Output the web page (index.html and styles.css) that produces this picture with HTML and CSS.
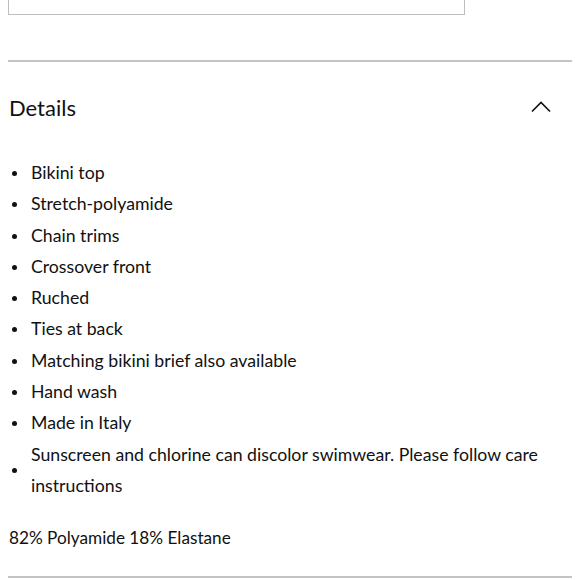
FILE: index.html
```html
<!DOCTYPE html>
<html>
<head>
<meta charset="utf-8">
<link rel="stylesheet" href="styles.css">
</head>
<body>
<div class="page">
  <div class="select-box"></div>
  <section class="accordion">
    <div class="acc-head">
      <h2 class="acc-title">Details</h2>
      <svg class="chev" width="20" height="12" viewBox="0 0 20 12"><polyline points="1,10.5 10,1.5 19,10.5" fill="none" stroke="#111" stroke-width="1.6"/></svg>
    </div>
    <ul class="features">
      <li>Bikini top</li>
      <li>Stretch-polyamide</li>
      <li>Chain trims</li>
      <li>Crossover front</li>
      <li>Ruched</li>
      <li>Ties at back</li>
      <li>Matching bikini brief also available</li>
      <li>Hand wash</li>
      <li>Made in Italy</li>
      <li class="multi">Sunscreen and chlorine can discolor swimwear. Please follow care instructions</li>
    </ul>
    <p class="composition">82% Polyamide 18% Elastane</p>
  </section>
</div>
</body>
</html>
```
FILE: styles.css
```css
html, body {
  margin: 0;
  padding: 0;
  background: #fff;
}
body {
  font-family: "Lato", "Noto Sans", sans-serif;
  color: #111;
  overflow: hidden;
}
.page {
  padding: 0 8px;
}
.select-box {
  width: 455px;
  height: 40px;
  margin-top: -27px;
  border: 1px solid #bdbdbd;
}
.accordion {
  margin-top: 45px;
  border-top: 2px solid #c4c4c4;
  border-bottom: 2px solid #c4c4c4;
}
.acc-head {
  display: flex;
  align-items: center;
  justify-content: space-between;
  height: 90px;
  padding-bottom: 4px;
  padding-right: 21px;
}
.acc-title {
  margin: 0;
  font-size: 22px;
  font-weight: 400;
  padding-left: 1px;
}
.chev {
  display: block;
}
.features {
  list-style: none;
  margin: 0;
  padding: 1px 0 0;
}
.features li {
  position: relative;
  padding-left: 23px;
  font-size: 17.7px;
  line-height: 31.3px;
}
.features li::before {
  content: "";
  position: absolute;
  left: 4px;
  top: 14px;
  width: 5px;
  height: 5px;
  border-radius: 50%;
  background: #111;
}
.features li.multi::before {
  top: 29.5px;
}
.composition {
  margin: 21px 0 0;
  padding-left: 1px;
  font-size: 17.2px;
  line-height: 31px;
  padding-bottom: 23px;
}
```
